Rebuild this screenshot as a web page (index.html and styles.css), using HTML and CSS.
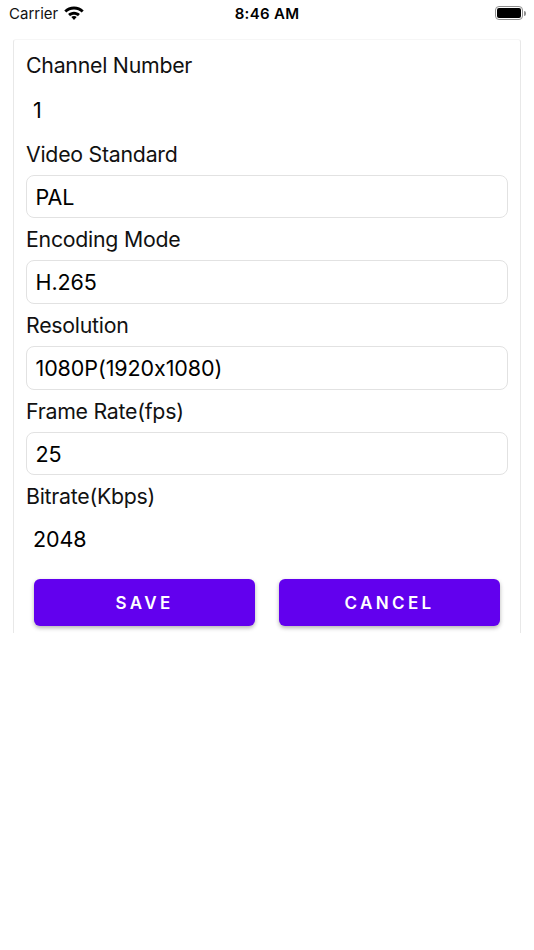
FILE: index.html

```html
<!DOCTYPE html>
<html lang="en">
<head>
  <meta charset="UTF-8">
  <meta name="viewport" content="width=device-width, initial-scale=1.0">
  <title>Channel Settings</title>
  <link rel="stylesheet" href="styles.css">
</head>
<body>
  <div class="status-bar">
    <div class="status-left">
      <span class="carrier">Carrier</span>
      <svg class="wifi" width="20" height="15" viewBox="0 0 20 15">
        <path d="M10 1.500c-3.800 0-7.200 1.500-9.700 3.900l2 2.100c2-2 4.700-3.100 7.700-3.100s5.700 1.100 7.700 3.100l2-2.100C17.200 3 13.800 1.500 10 1.500z" fill="#000"/>
        <path d="M10 6.800c-2.300 0-4.300.9-5.900 2.300l2 2.100c1-1 2.400-1.500 3.900-1.500s2.900.5 3.900 1.500l2-2.100C14.300 7.700 12.300 6.800 10 6.800z" fill="#000"/>
        <path d="M10 11.100c-1.100 0-2 .4-2.700 1L10 14.900l2.700-2.800c-.7-.6-1.600-1-2.700-1z" fill="#000"/>
      </svg>
    </div>
    <span class="clock">8:46 AM</span>
    <div class="battery">
      <div class="battery-body"><div class="battery-fill"></div></div>
      <div class="battery-cap"></div>
    </div>
  </div>

  <div class="card">
    <label class="field-label first">Channel Number</label>
    <div class="field-value">1</div>
    <label class="field-label">Video Standard</label>
    <div class="field-box">PAL</div>
    <label class="field-label">Encoding Mode</label>
    <div class="field-box">H.265</div>
    <label class="field-label">Resolution</label>
    <div class="field-box">1080P(1920x1080)</div>
    <label class="field-label">Frame Rate(fps)</label>
    <div class="field-box">25</div>
    <label class="field-label">Bitrate(Kbps)</label>
    <div class="field-value">2048</div>
    <div class="actions">
      <button class="btn">SAVE</button>
      <button class="btn">CANCEL</button>
    </div>
  </div>
</body>
</html>
```

FILE: styles.css

```css
* {
  box-sizing: border-box;
  font-family: Inter, 'Liberation Sans', sans-serif;
}
html, body {
  height: 100%;
}
body {
  margin: 0;
  background: #fff;
  color: #000;
  overflow: hidden;
}
.status-bar {
  position: relative;
  display: flex;
  justify-content: space-between;
  align-items: flex-start;
  height: 39px;
  padding: 5px 8px 0 9px;
}
.status-left {
  display: flex;
  align-items: center;
  gap: 6px;
}
.carrier {
  font-size: 15px;
  line-height: 18px;
  color: #111;
}
.wifi {
  margin-top: -4px;
}
.clock {
  position: absolute;
  top: 5px;
  left: 0;
  right: 0;
  text-align: center;
  font-size: 15px;
  line-height: 18px;
  font-weight: 600;
  letter-spacing: 0.3px;
}
.battery {
  display: flex;
  align-items: center;
  margin-top: 1px;
}
.battery-body {
  width: 28px;
  height: 14px;
  border: 1px solid #8e8e8e;
  border-radius: 4px;
  padding: 1px;
}
.battery-fill {
  width: 100%;
  height: 100%;
  background: #000;
  border-radius: 2px;
}
.battery-cap {
  width: 2px;
  height: 5px;
  margin-left: 1px;
  background: #8e8e8e;
  border-radius: 0 2px 2px 0;
}
.card {
  width: 508px;
  height: 594px;
  margin-left: 13px;
  padding: 5px 12px 0;
  background: #fff;
  border: 1px solid #e8e8e8;
  border-bottom: none;
  border-top-color: #f6f6f6;
  border-radius: 3px 3px 0 0;
  overflow: hidden;
}
.field-label {
  display: block;
  height: 42.2px;
  line-height: 43px;
  font-size: 21.3px;
  letter-spacing: -0.25px;
  color: #111;
}
.field-label.first {
  height: 42.5px;
  line-height: 41px;
}
.field-value {
  height: 44px;
  margin-top: 1px;
  padding-left: 7px;
  line-height: 43px;
  font-size: 21.5px;
  letter-spacing: -0.1px;
}
.field-box {
  height: 43.5px;
  padding-left: 8.5px;
  line-height: 42px;
  font-size: 21.5px;
  letter-spacing: -0.1px;
  border: 1px solid #e2e2e2;
  border-radius: 8px;
}
.actions {
  display: flex;
  gap: 24px;
  margin-top: 16.5px;
  padding: 0 8px;
}
.btn {
  flex: 1;
  height: 47px;
  padding: 1px 0 0;
  border: none;
  border-radius: 6px;
  background: #6200ee;
  color: #fff;
  font-size: 17px;
  font-weight: 600;
  letter-spacing: 3.4px;
  box-shadow: 0 2px 4px rgba(0, 0, 0, 0.3);
}
```
